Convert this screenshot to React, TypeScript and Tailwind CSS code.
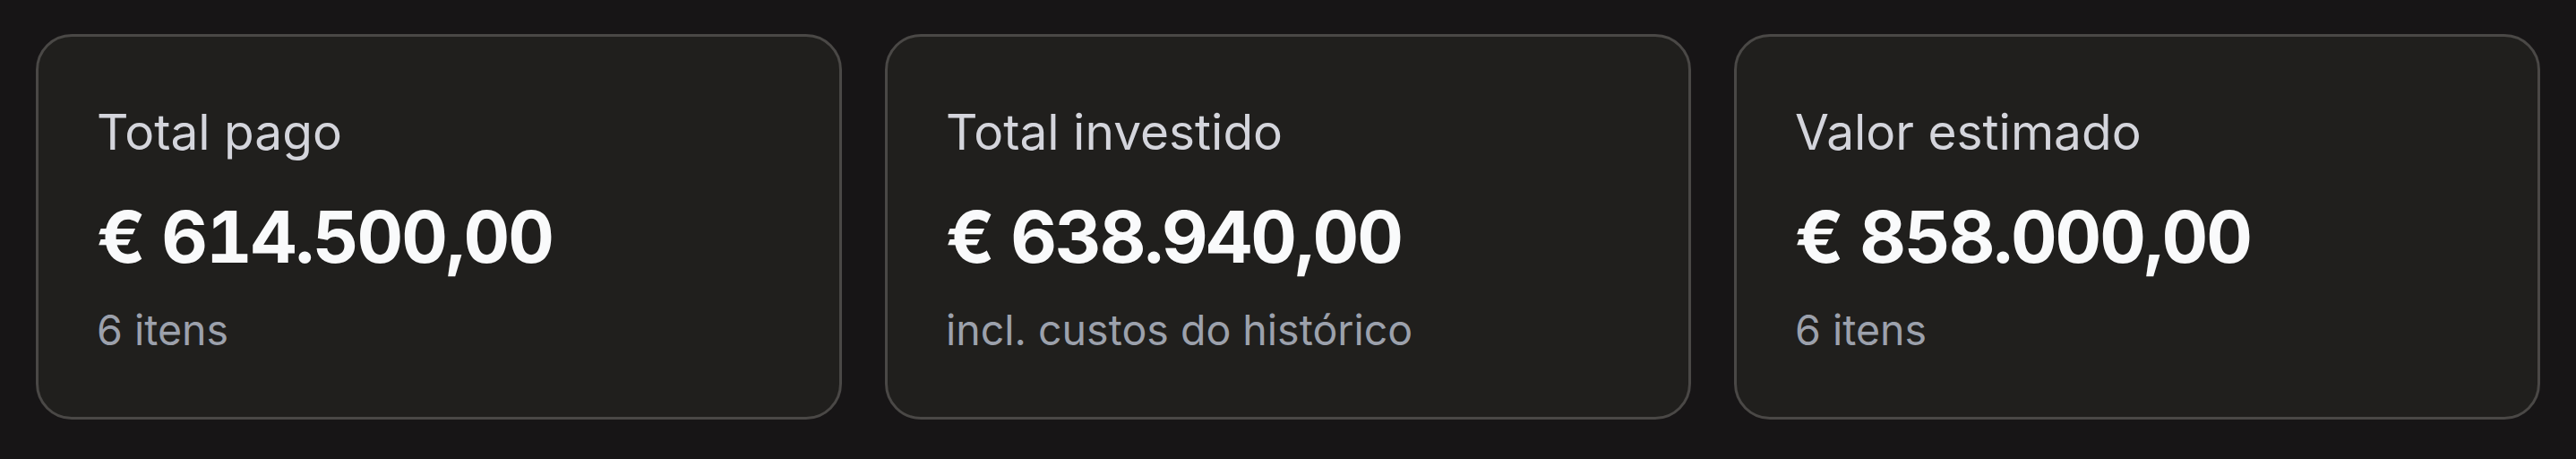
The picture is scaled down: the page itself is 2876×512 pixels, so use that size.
const cards = [
  { label: 'Total pago', value: '€ 614.500,00', note: '6 itens' },
  { label: 'Total investido', value: '€ 638.940,00', note: 'incl. custos do histórico' },
  { label: 'Valor estimado', value: '€ 858.000,00', note: '6 itens' },
];

function StatCard({ label, value, note }: { label: string; value: string; note: string }) {
  return (
    <div className="rounded-[40px] border-[3px] border-[#4a4846] bg-[#201f1d] px-[65px] pt-[66px] pb-[64px]">
      <p className="text-[55px] leading-[80px] text-[#d4d5dc]">{label}</p>
      <p className="mt-[24px] text-[80px] leading-[106px] font-bold tracking-tight tabular-nums text-[#f9fafb]">
        {value}
      </p>
      <p className="mt-[18px] text-[46.5px] leading-[66px] text-[#9ca1ac]">{note}</p>
    </div>
  );
}

export default function App() {
  return (
    <div
      className="min-h-[512px] w-full bg-[#171516] px-10 pt-[38px]"
      style={{ fontFamily: 'Inter, "Noto Sans", sans-serif' }}
    >
      <div className="grid grid-cols-3 gap-12">
        {cards.map((c) => (
          <StatCard key={c.label} {...c} />
        ))}
      </div>
    </div>
  );
}
